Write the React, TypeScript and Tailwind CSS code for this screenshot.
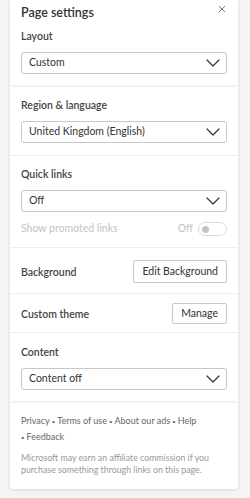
import { ReactNode } from 'react'

const font = { fontFamily: 'Lato, "Open Sans", sans-serif' }

function Chevron() {
  return (
    <svg width="14" height="8" viewBox="0 0 14 8" fill="none">
      <path d="M1 1l6 6 6-6" stroke="#333" strokeWidth="1.2" strokeLinecap="round" strokeLinejoin="round" />
    </svg>
  )
}

function Select({ value }: { value: string }) {
  return (
    <div className="h-[22px] flex items-center justify-between pl-[7px] pr-[6px] border border-[#c8c8c8] rounded-[3px] text-[10.5px] text-[#333]">
      <span>{value}</span>
      <Chevron />
    </div>
  )
}

function Label({ children }: { children: ReactNode }) {
  return <div className="text-[10.5px] leading-4 font-semibold text-[#444]">{children}</div>
}

const Dot = () => <span className="text-[6px] align-middle mx-[2px]">•</span>

export default function App() {
  return (
    <div className="w-[250px] h-[498px] bg-[#f5f5f5] pl-[10px] overflow-hidden" style={font}>
      <div className="w-[228px] bg-white rounded-b-[4px] shadow-[0_1px_4px_rgba(0,0,0,0.12)]">

        {/* Header + layout */}
        <div className="px-[11px] pt-[3px] pb-[11px]">
          <div className="flex items-center justify-between h-5">
            <span className="text-[12.5px] font-semibold text-[#333]">Page settings</span>
            <svg width="8" height="8" viewBox="0 0 8 8" className="-mt-[8px] mr-[1px]">
              <path d="M1 1l6 6M7 1L1 7" stroke="#777" strokeWidth="1" />
            </svg>
          </div>
          <div className="mt-[5px] mb-[8px]"><Label>Layout</Label></div>
          <Select value="Custom" />
        </div>
        <div className="h-[2px] bg-[#f1f1f1]" />

        {/* Region */}
        <div className="px-[11px] pt-[10px] pb-[12px]">
          <div className="mb-[8px]"><Label>Region &amp; language</Label></div>
          <Select value="United Kingdom (English)" />
        </div>
        <div className="h-px bg-[#ededed]" />

        {/* Quick links */}
        <div className="px-[11px] pt-[10px] pb-[10px]">
          <div className="mb-[8px]"><Label>Quick links</Label></div>
          <Select value="Off" />
          <div className="flex items-center justify-between mt-[9px] h-4">
            <span className="text-[10.5px] text-[#c4c4c4]">Show promoted links</span>
            <div className="flex items-center gap-[5px]">
              <span className="text-[10.5px] text-[#c4c4c4]">Off</span>
              <div className="w-[29px] h-[14px] rounded-full border border-[#dcdcdc] flex items-center pl-[3px]">
                <div className="w-[7px] h-[7px] rounded-full bg-[#c4c4c4]" />
              </div>
            </div>
          </div>
        </div>
        <div className="h-px bg-[#ededed]" />

        {/* Background */}
        <div className="px-[11px] pt-[12px] pb-[10px] flex items-center justify-between">
          <Label>Background</Label>
          <div className="h-[23px] px-[8px] flex items-center border border-[#c8c8c8] rounded-[2px] text-[10.5px] text-[#333]">
            Edit Background
          </div>
        </div>
        <div className="h-px bg-[#ededed]" />

        {/* Custom theme */}
        <div className="px-[11px] pt-[9px] pb-[8px] flex items-center justify-between">
          <Label>Custom theme</Label>
          <div className="h-[21px] px-[8px] flex items-center border border-[#c8c8c8] rounded-[2px] text-[10.5px] text-[#333]">
            Manage
          </div>
        </div>
        <div className="h-px bg-[#ededed]" />

        {/* Content */}
        <div className="px-[11px] pt-[11px] pb-[11px]">
          <div className="mb-[8px]"><Label>Content</Label></div>
          <Select value="Content off" />
        </div>
        <div className="h-[2px] bg-[#f1f1f1]" />

        {/* Footer */}
        <div className="px-[11px] pt-[10px] pb-[13px]">
          <div className="text-[9px] leading-[15px] text-[#666]">
            Privacy<Dot />Terms of use<Dot />About our ads<Dot />Help
            <br /><span className="text-[6px] align-middle mr-[2px]">•</span>Feedback
          </div>
          <div className="mt-[7px] text-[8.8px] leading-[12px] text-[#999]">
            Microsoft may earn an affiliate commission if you purchase something through links on this page.
          </div>
        </div>
      </div>
    </div>
  )
}
